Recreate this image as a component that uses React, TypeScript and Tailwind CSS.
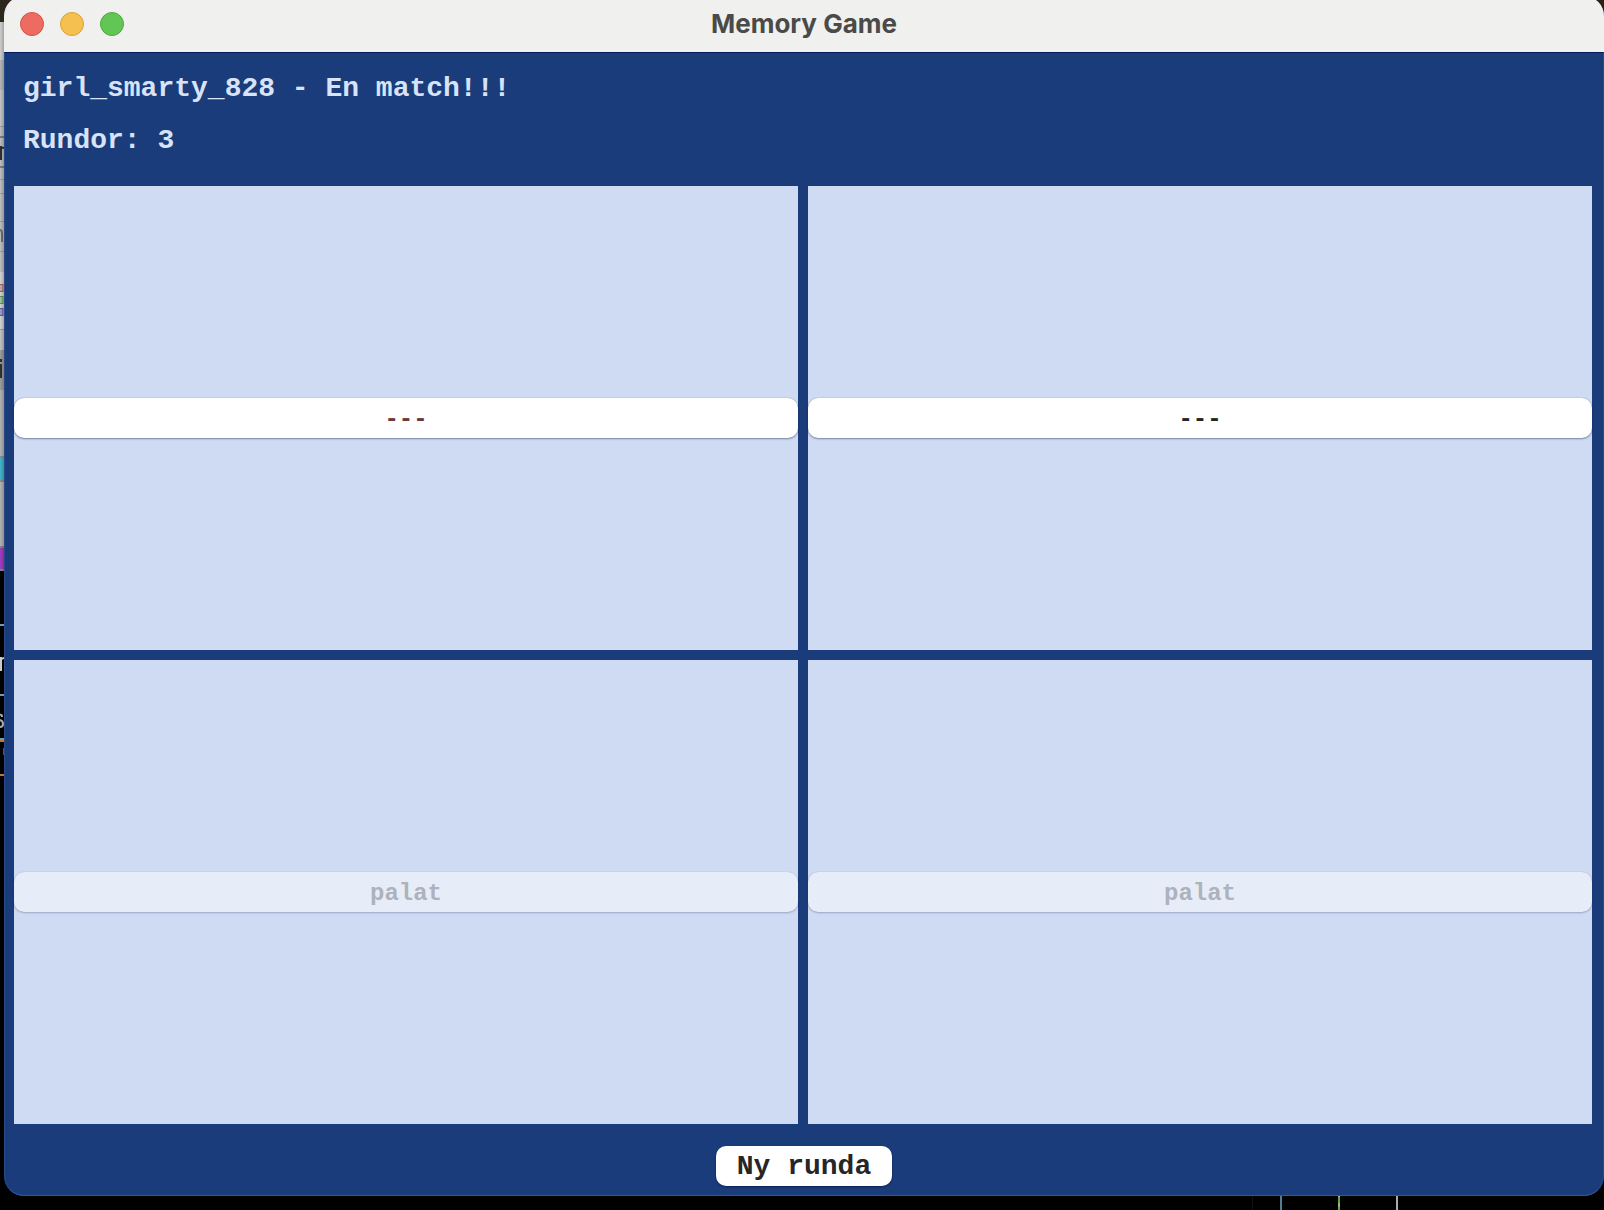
type Card = { id: number; label: string; className: string; disabled?: boolean };

const cards: Card[] = [
  { id: 1, label: "---", className: "bg-white text-[#6b3a3c] shadow-[0_0_1px_rgba(20,35,80,0.4),0_1px_2px_rgba(20,35,80,0.45)]" },
  { id: 2, label: "---", className: "bg-white text-[#262626] shadow-[0_0_1px_rgba(20,35,80,0.4),0_1px_2px_rgba(20,35,80,0.45)]" },
  { id: 3, label: "palat", className: "bg-[#e7edf8] text-[#adb2bb] shadow-[0_0_1px_rgba(20,35,80,0.25),0_1px_2px_rgba(20,35,80,0.25)]", disabled: true },
  { id: 4, label: "palat", className: "bg-[#e7edf8] text-[#adb2bb] shadow-[0_0_1px_rgba(20,35,80,0.25),0_1px_2px_rgba(20,35,80,0.25)]", disabled: true },
];

const windowControls = [
  { name: "Close", className: "bg-[#ed6b60] border-[#d35248]" },
  { name: "Minimize", className: "bg-[#f5c050] border-[#d9a03c]" },
  { name: "Zoom", className: "bg-[#62c655] border-[#4fa73f]" },
];

/* Slice of the desktop that shows to the left of the window. */
function DesktopEdge() {
  return (
    <svg className="absolute top-0 left-0" width="24" height="1210" viewBox="0 0 24 1210" aria-hidden="true">
      <defs>
        <linearGradient id="edge" gradientUnits="userSpaceOnUse" x1="0" y1="0" x2="4" y2="0">
          <stop offset="0" stopColor="#000" stopOpacity="0.06" />
          <stop offset="1" stopColor="#000" stopOpacity="0.26" />
        </linearGradient>
      </defs>
      <rect width="24" height="22" fill="#2e271d" />
      <rect y="22" width="24" height="38" fill="#dcdcdc" />
      <rect y="60" width="4" height="30" fill="#c4c4c4" />
      <rect y="90" width="4" height="36" fill="#d2d2d2" />
      <rect y="127" width="4" height="145" fill="#cbcbcb" />
      <path d="M0 137H4M0 167H4" stroke="#898989" strokeWidth="2" />
      <path d="M0 126.500H4M0 179.500H4M0 193.500H4M0 221.500H4M0 251.500H4" stroke="#aaa" />
      <rect y="146" width="2" height="14" fill="#333" />
      <path d="M1 149Q2 147 4 148" fill="none" stroke="#333" strokeWidth="2" />
      <path d="M0 230Q2 230 2 234V242" fill="none" stroke="#777" strokeWidth="2" />
      <rect y="272" width="4" height="57" fill="#e2e2e2" />
      <rect x="-3" y="284.500" width="6" height="7" fill="#d8b8b8" stroke="#b06464" />
      <rect x="-3" y="296.500" width="6" height="7" fill="#b0cfa8" stroke="#57a552" />
      <rect x="-3" y="308.500" width="6" height="7" fill="#a8a8d4" stroke="#5c5cb8" />
      <rect y="329" width="4" height="21" fill="#d0d0d0" />
      <path d="M0 329.500H4" stroke="#aaa" />
      <rect y="350" width="4" height="40" fill="#a7a7a7" />
      <rect y="359" width="2" height="3" fill="#333" />
      <rect y="364" width="2" height="14" fill="#333" />
      <rect y="390" width="4" height="181" fill="#c0c0c0" />
      <rect y="456" width="4" height="26" fill="#989898" />
      <rect y="458" width="4" height="22" fill="#48c0d8" />
      <rect y="546" width="4" height="25" fill="#929292" />
      <rect y="548" width="4" height="21" fill="#b040d0" />
      <rect y="22" width="4" height="549" fill="url(#edge)" />
      <path d="M0 625H4M0 695H4M0 739H4" stroke="#6b9fb5" strokeWidth="2" />
      <path d="M0 741H4M0 775H4" stroke="#c8752b" strokeWidth="2" />
      <path d="M1 657V671M1 660Q2 658 4 658" fill="none" stroke="#ccc" strokeWidth="2" />
      <path d="M0 715Q2 714 2 717M0 720Q3 721 3 724T0 727" fill="none" stroke="#aaa" strokeWidth="2" />
      <path d="M3.500 748V755" stroke="#555" />
    </svg>
  );
}

/* Coloured guides of the terminal that show below the window. */
function TerminalGuides() {
  return (
    <svg className="absolute right-0 bottom-0" width="360" height="14" viewBox="0 0 360 14" aria-hidden="true">
      <path d="M8.500 0V14" stroke="#111" />
      <path d="M37 0V14" stroke="#4d8094" strokeWidth="2" />
      <path d="M95 0V14" stroke="#55ae36" strokeWidth="2" />
      <path d="M95 0V1M95 7V11" stroke="#aaa" strokeWidth="2" />
      <path d="M153 0V14" stroke="#aaa" strokeWidth="2" />
    </svg>
  );
}

export default function App() {
  return (
    <div className="relative isolate flex min-h-screen flex-col overflow-hidden bg-black pb-3.5 pl-1">
      <DesktopEdge />
      <div className="absolute top-0 right-0 -z-10 h-6 w-6 bg-[#2a2110]" />
      <TerminalGuides />
      <main className="relative -mt-1 flex flex-1 flex-col overflow-hidden rounded-[20px] bg-[#1a3c7b] font-['Liberation_Mono',monospace] font-bold">
        <header className="grid h-14 grid-cols-[1fr_auto_1fr] items-center bg-[#f0f0ee] px-4">
          <div className="flex gap-4">
            {windowControls.map((control) => (
              <button
                key={control.name}
                type="button"
                aria-label={control.name}
                className={`size-6 rounded-full border ${control.className}`}
              />
            ))}
          </div>
          <h1 className="font-['Inter',sans-serif] text-[26px] leading-8 font-bold text-[#4a4a48]">Memory Game</h1>
        </header>
        <section className="flex flex-1 flex-col rounded-b-[20px] border border-x-[#294a88] border-t-[#02195b] border-b-[#34579a]">
          <div className="flex flex-col gap-5 px-[18px] pt-5 pb-[29px] text-[28px] leading-8 text-[#d9e3f7]">
            <p>girl_smarty_828 - En match!!!</p>
            <p>Rundor: 3</p>
          </div>
          <div className="grid flex-1 auto-rows-fr grid-cols-2 gap-2.5 pr-[11px] pl-[9px]">
            {cards.map((card) => (
              <div key={card.id} className="flex items-center bg-[#cfdbf3]">
                <button
                  type="button"
                  disabled={card.disabled}
                  className={`h-10 w-full rounded-[10px] pt-1 text-2xl leading-8 ${card.className}`}
                >
                  {card.label}
                </button>
              </div>
            ))}
          </div>
          <footer className="flex justify-center pt-[22px] pb-[9px]">
            <button
              type="button"
              className="h-10 rounded-[10px] bg-white px-[21px] pt-0.5 text-[28px] leading-8 text-[#262626] shadow-[0_1px_2px_rgba(0,10,40,0.5)]"
            >
              Ny runda
            </button>
          </footer>
        </section>
      </main>
    </div>
  );
}
